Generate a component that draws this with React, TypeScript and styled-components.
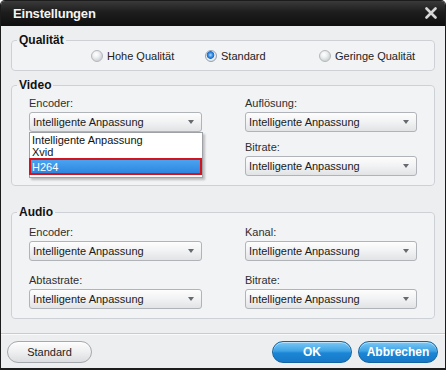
import React from 'react';
import styled, { createGlobalStyle } from 'styled-components';

const GlobalStyle = createGlobalStyle`
  html, body {
    margin: 0;
    padding: 0;
    background: #ffffff;
  }
  * {
    box-sizing: border-box;
  }
`;

const Window = styled.div`
  width: 446px;
  height: 370px;
  display: flex;
  flex-direction: column;
  background: #eceef0;
  border: 1px solid #1c1c1c;
  border-bottom-width: 2px;
  border-radius: 5px 5px 0 0;
  overflow: hidden;
  font-family: 'Liberation Sans', Arial, sans-serif;
  font-size: 11px;
  color: #222;
`;

const TitleBar = styled.div`
  height: 25px;
  flex-shrink: 0;
  display: flex;
  align-items: center;
  justify-content: space-between;
  padding: 0 8px 0 12px;
  background: linear-gradient(#3a3a3a 0%, #1d1d1d 45%, #0f0f0f 100%);
`;

const Title = styled.span`
  font-size: 13px;
  font-weight: bold;
  color: #f4f4f4;
  letter-spacing: -0.2px;
`;

const CloseButton = styled.span`
  display: flex;
  width: 12px;
  height: 12px;
  margin-top: -1px;
`;

const Content = styled.div`
  padding: 0 10px;
`;

const Group = styled.fieldset<{ $top: number }>`
  margin: ${({ $top }) => $top}px 0 0;
  padding: 0;
  min-width: 0;
  border: 1px solid #cdd1d6;
  border-radius: 4px;
  background: #f2f3f5;

  legend {
    margin-left: 5px;
    padding: 0 2px;
    font-size: 12px;
    line-height: 14px;
    font-weight: bold;
    color: #111;
  }
`;

const RadioRow = styled.div`
  display: flex;
  padding: 2px 0 7px 79px;
`;

const RadioItem = styled.label`
  width: 114px;
  display: flex;
  align-items: center;
  gap: 4px;
  line-height: 14px;
  color: #222;
`;

const RadioDot = styled.span<{ $checked?: boolean }>`
  width: 12px;
  height: 12px;
  border-radius: 50%;
  border: 1px solid ${({ $checked }) => ($checked ? '#97a3b0' : '#b4b7bb')};
  background: ${({ $checked }) =>
    $checked
      ? 'radial-gradient(circle at 45% 40%, #b9dcff 0, #3c92e6 2px, #1f6cc4 3.5px, #f4f5f6 4.2px, #dadcdf 6px)'
      : 'radial-gradient(circle at 40% 35%, #ffffff 0, #eef0f1 3px, #d3d6d9 6px)'};
`;

const Columns = styled.div<{ $top: number }>`
  display: grid;
  grid-template-columns: 173px 172px;
  column-gap: 43px;
  padding: ${({ $top }) => $top}px 0 9px 17px;
  align-items: start;
`;

const Column = styled.div<{ $gap: number }>`
  display: flex;
  flex-direction: column;
  gap: ${({ $gap }) => $gap}px;
`;

const Field = styled.div`
  position: relative;
  display: flex;
  flex-direction: column;
`;

const FieldLabel = styled.span`
  line-height: 14px;
  margin-bottom: 2px;
  color: #2e2e2e;
`;

const SelectBox = styled.div`
  height: 20px;
  display: flex;
  align-items: center;
  justify-content: space-between;
  padding: 0 7px 0 3px;
  border: 1px solid #b0b4b9;
  border-radius: 3px;
  background: linear-gradient(#fdfdfd 0%, #f1f2f3 50%, #e1e3e5 100%);
  color: #1a1a1a;
  white-space: nowrap;
`;

const Arrow = styled.span`
  width: 0;
  height: 0;
  border-left: 3.5px solid transparent;
  border-right: 3.5px solid transparent;
  border-top: 4px solid #666a6e;
`;

const DropList = styled.ul`
  position: absolute;
  top: 100%;
  left: 0;
  width: 174px;
  margin: 0;
  padding: 1px 0 2px;
  list-style: none;
  background: #ffffff;
  border: 1px solid #9ea2a7;
  box-shadow: 2px 2px 2px rgba(0, 0, 0, 0.22);
  z-index: 2;
`;

const DropItem = styled.li<{ $active?: boolean }>`
  line-height: 12px;
  padding: 0 2px;
  color: ${({ $active }) => ($active ? '#ffffff' : '#111')};
  ${({ $active }) =>
    $active &&
    `
    margin-left: -1px;
    padding: 1px 1px 0;
    border: 2px solid #d3141d;
    background: linear-gradient(#4aa3f0, #2f86e0);
  `}
`;

const Footer = styled.div`
  margin-top: auto;
  display: flex;
  align-items: center;
  justify-content: space-between;
  padding: 7px 7px 5px 6px;
  border-top: 1px solid #c8cbcf;
  box-shadow: inset 0 1px 0 #fafafa;
`;

const ButtonGroup = styled.div`
  display: flex;
  gap: 6px;
`;

const Button = styled.button<{ $primary?: boolean; $width: number }>`
  width: ${({ $width }) => $width}px;
  height: 22px;
  padding: 0;
  border-radius: 11px;
  font-family: 'Liberation Sans', Arial, sans-serif;
  font-size: ${({ $primary }) => ($primary ? 12 : 11)}px;
  font-weight: ${({ $primary }) => ($primary ? 'bold' : 'normal')};
  color: ${({ $primary }) => ($primary ? '#ffffff' : '#222')};
  border: 1px solid ${({ $primary }) => ($primary ? '#16649f' : '#a5a8ac')};
  background: ${({ $primary }) =>
    $primary
      ? 'linear-gradient(#7cc8f4 0%, #3ea3e6 45%, #1b86d6 55%, #1678c6 100%)'
      : 'linear-gradient(#fdfdfd 0%, #eeeff0 50%, #dcdde0 100%)'};
  box-shadow: inset 0 1px 0 rgba(255, 255, 255, 0.5);
  cursor: pointer;
`;

const Select: React.FC<{ value: string }> = ({ value }) => (
  <SelectBox>
    <span>{value}</span>
    <Arrow />
  </SelectBox>
);

const auto = 'Intelligente Anpassung';

export default function App() {
  return (
    <>
      <GlobalStyle />
      <Window>
        <TitleBar>
          <Title>Einstellungen</Title>
          <CloseButton>
            <svg width="12" height="12" viewBox="0 0 12 12">
              <path d="M1.5 1.5 L10.5 10.5 M10.5 1.5 L1.5 10.5" stroke="#d6d6d6" strokeWidth="2.6" strokeLinecap="round" />
            </svg>
          </CloseButton>
        </TitleBar>

        <Content>
          <Group $top={7}>
            <legend>Qualität</legend>
            <RadioRow>
              <RadioItem><RadioDot />Hohe Qualität</RadioItem>
              <RadioItem><RadioDot $checked />Standard</RadioItem>
              <RadioItem><RadioDot />Geringe Qualität</RadioItem>
            </RadioRow>
          </Group>

          <Group $top={7}>
            <legend>Video</legend>
            <Columns $top={4}>
              <Column $gap={8}>
                <Field>
                  <FieldLabel>Encoder:</FieldLabel>
                  <Select value={auto} />
                  <DropList>
                    <DropItem>{auto}</DropItem>
                    <DropItem>Xvid</DropItem>
                    <DropItem $active>H264</DropItem>
                  </DropList>
                </Field>
              </Column>
              <Column $gap={8}>
                <Field>
                  <FieldLabel>Auflösung:</FieldLabel>
                  <Select value={auto} />
                </Field>
                <Field>
                  <FieldLabel>Bitrate:</FieldLabel>
                  <Select value={auto} />
                </Field>
              </Column>
            </Columns>
          </Group>

          <Group $top={19}>
            <legend>Audio</legend>
            <Columns $top={6}>
              <Column $gap={12}>
                <Field>
                  <FieldLabel>Encoder:</FieldLabel>
                  <Select value={auto} />
                </Field>
                <Field>
                  <FieldLabel>Abtastrate:</FieldLabel>
                  <Select value={auto} />
                </Field>
              </Column>
              <Column $gap={12}>
                <Field>
                  <FieldLabel>Kanal:</FieldLabel>
                  <Select value={auto} />
                </Field>
                <Field>
                  <FieldLabel>Bitrate:</FieldLabel>
                  <Select value={auto} />
                </Field>
              </Column>
            </Columns>
          </Group>
        </Content>

        <Footer>
          <Button $width={85}>Standard</Button>
          <ButtonGroup>
            <Button $primary $width={80}>OK</Button>
            <Button $primary $width={80}>Abbrechen</Button>
          </ButtonGroup>
        </Footer>
      </Window>
    </>
  );
}
